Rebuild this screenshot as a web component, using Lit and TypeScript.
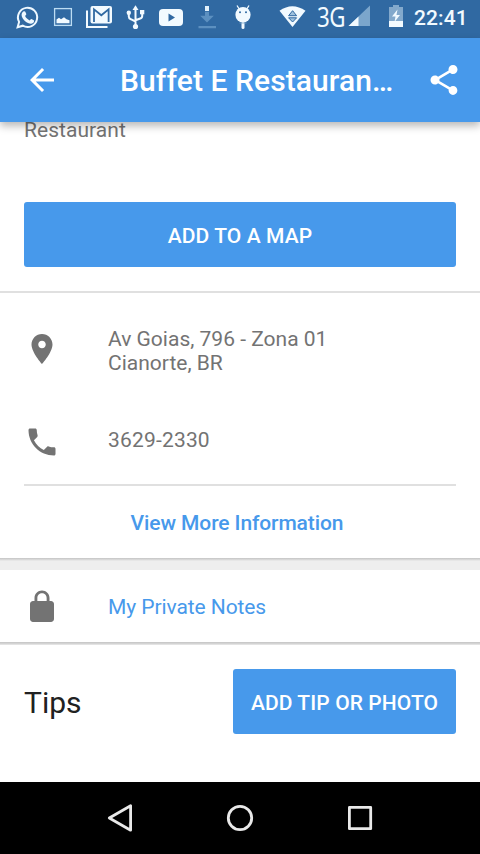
import { LitElement, html, css, svg } from "lit";
import { customElement } from "lit/decorators.js";

const glyph = (w: number, h: number, body: unknown) => html`<svg
  width=${w} height=${h} viewBox="0 0 ${w} ${h}">${body}</svg>`;

const material = (d: string) => html`<svg width="36" height="36" viewBox="0 0 24 24"
  fill="currentColor"><path d=${d}></path></svg>`;

const BACK = "M20 11H7.83l5.59-5.59L12 4l-8 8 8 8 1.41-1.41L7.83 13H20v-2z";
const SHARE = "M18 16.08c-.76 0-1.44.3-1.96.77L8.91 12.7c.05-.23.09-.46.09-.7s-.04-.47-.09-.7l7.05-4.11c.54.5 1.25.81 2.04.81 1.66 0 3-1.34 3-3s-1.34-3-3-3-3 1.34-3 3c0 .24.04.47.09.7L8.04 9.81C7.5 9.31 6.79 9 6 9c-1.66 0-3 1.34-3 3s1.34 3 3 3c.79 0 1.5-.31 2.04-.81l7.12 4.16c-.05.21-.08.43-.08.65 0 1.61 1.31 2.92 2.92 2.92s2.92-1.31 2.92-2.92-1.31-2.92-2.92-2.92z";
const PLACE = "M12 2C8.13 2 5 5.13 5 9c0 5.25 7 13 7 13s7-7.75 7-13c0-3.87-3.13-7-7-7zm0 9.5c-1.38 0-2.5-1.12-2.5-2.5s1.12-2.5 2.5-2.5 2.5 1.12 2.5 2.5-1.12 2.5-2.5 2.5z";
const PHONE = "M6.62 10.79c1.44 2.83 3.76 5.14 6.59 6.59l2.2-2.2c.27-.27.67-.36 1.02-.24 1.12.37 2.33.57 3.57.57.55 0 1 .45 1 1V20c0 .55-.45 1-1 1-9.39 0-17-7.61-17-17 0-.55.45-1 1-1h3.5c.55 0 1 .45 1 1 0 1.25.2 2.45.57 3.57.11.35.03.74-.25 1.02l-2.2 2.2z";
const LOCK = "M18 8h-1V6c0-2.76-2.24-5-5-5S7 3.24 7 6v2H6c-1.1 0-2 .9-2 2v10c0 1.1.9 2 2 2h12c1.1 0 2-.9 2-2V10c0-1.1-.9-2-2-2zM15.1 8H8.9V6c0-1.71 1.39-3.1 3.1-3.1s3.1 1.39 3.1 3.1v2z";

@customElement("status-bar")
class StatusBar extends LitElement {
  static styles = css`
    :host { display: flex; height: 38px; box-sizing: border-box; padding-left: 9px;
      background: #3069a2; color: #f2faff; }
    svg { display: block; flex: none; }
    .network { width: 31px; margin-left: 8px; font: 400 26px/34px "Noto Sans", sans-serif;
      letter-spacing: -0.5px; white-space: nowrap; transform: scale(0.86, 1.04); transform-origin: left 0; margin-top: -1px; }
    .battery { margin-left: 17px; }
    .clock { margin-left: 11px; font: 500 21px/36px Roboto, sans-serif; letter-spacing: 0.1px; }
  `;
  render() {
    return html`
      ${glyph(36, 38, svg`<g fill="none" stroke="#eef8ff">
        <path d="M8.6 27.2l1.5-5.3a9.6 9.6 0 1 1 3.7 3.8z" stroke-width="2"></path></g>
        <path fill="#eef8ff" d="M14.3 11.6c.8-.6 1.7-.6 2 .1l1 2.4c.2.7-.9 1.5-1.2 2 .9 2 2.6 3.5 4.6 4.3.5-.4 1.2-1.6 1.8-1.4l2.3 1.2c.7.5.1 2-.5 2.6-1.5 1.2-3.3 1-5.3.2-2.7-1.1-5-3.6-6.1-6.3-.7-2-.2-4 1.400-5.100z"></path>`)}
      ${glyph(36, 38, svg`
        <rect x="9.600" y="8.600" width="16.800" height="16.800" fill="none" stroke="#bcdcf3" stroke-width="1.300"></rect>
        <path fill="#f2faff" d="M11.500 19.500l2.500-1.800 2 1.500 3-2 2.500 2 3 1v3h-13z"></path>`)}
      ${glyph(36, 38, svg`<path d="M6 10.500V27h20.500" fill="none" stroke="#f2faff" stroke-width="2"></path>
        <rect x="9.500" y="6" width="21.500" height="17.500" rx="2" fill="#f2faff"></rect>
        <path d="M13 22V9.300l7.300 6 7.300-6V22" fill="none" stroke="#3069a2" stroke-width="1.800"></path>`)}
      ${glyph(36, 38, svg`<g fill="none" stroke="#f2faff" stroke-width="2">
        <path d="M18.500 9v16M11.800 14v2.500q0 2 2 2.700l4.700 2.300M25.200 13v3q0 2-2 2.500l-4.700 1.700"></path></g>
        <g fill="#f2faff"><path d="M18.500 5.200l3 4.800h-6z"></path><circle cx="18.500" cy="26.500" r="2.600"></circle>
        <circle cx="11.800" cy="12.700" r="2.200"></circle><rect x="23" y="10" width="4.300" height="4.300"></rect></g>`)}
      ${glyph(36, 38, svg`<rect x="6" y="9" width="24" height="17" rx="4" fill="#f2faff"></rect>
        <path d="M15.500 13.500l6.500 4-6.500 4z" fill="#3069a2"></path>`)}
      ${glyph(36, 38, svg`<path d="M16 6h4v5h-4z" fill="#e2f1fb"></path>
        <path d="M16 11.700h4v4h4.800L18 22.500l-6.800-6.800H16zM9.500 26h17.500v2.300H9.500z" fill="#5c90c0"></path>`)}
      ${glyph(36, 38, svg`<g fill="#f2faff"><ellipse cx="18" cy="14.800" rx="7.600" ry="7.800"></ellipse>
        <rect x="16.500" y="21.500" width="3" height="7.500" rx="1.500"></rect></g>
        <path d="M12 5.500l2.500 4M24 5.500l-2.500 4" stroke="#f2faff" stroke-width="1.300"></path>
        <circle cx="15" cy="12.300" r="1" fill="#3069a2"></circle><circle cx="21" cy="12.300" r="1" fill="#3069a2"></circle>
        <path d="M14.500 23h7" fill="none" stroke="#7ba6cc" stroke-width=".8"></path>`)}
      ${glyph(48, 38, svg`<path fill="#f2faff" d="M18.500 10.700q12.800-9 26 0L31.500 27z"></path>
        <path d="M27.600 15.700l4-5 4 5zM27.600 17.800h8l-4 4.200z" fill="#9fc2de" stroke="#3069a2" stroke-width="1"></path>`)}
      <span class="network">3G</span>
      ${glyph(24, 38, svg`<path d="M22 5.500V26H.5z" fill="#7ba6cc"></path>
        <path d="M10.500 16.500V26H.5z" fill="#f2faff"></path>`)}
      <svg class="battery" width="14" height="38" viewBox="0 0 14 38">
        <path d="M0 7h4V5h6v2h4v14H0z" fill="#83a9cc"></path>
        <path d="M0 21h14v6H0z" fill="#f2faff"></path>
        <path d="M8.500 9.500l-5.500 7h3.500l-1 5.500 5.500-7H7.500z" fill="#f2faff"></path></svg>
      <span class="clock">22:41</span>`;
  }
}

@customElement("nav-bar")
class NavBar extends LitElement {
  static styles = css`
    :host { display: flex; justify-content: center; align-items: center; gap: 84px;
      height: 72px; background: #000; }
    svg { fill: none; stroke: #e9e9e9; stroke-width: 2.8; stroke-linejoin: round; }
  `;
  render() {
    return html`
      ${glyph(36, 36, svg`<path d="M7.300 18L28.600 5.800v24.400z"></path>`)}
      ${glyph(36, 36, svg`<circle cx="18" cy="18" r="11.700"></circle>`)}
      ${glyph(36, 36, svg`<rect x="7.400" y="7.400" width="21.300" height="21.300"></rect>`)}`;
  }
}

@customElement("app-root")
class AppRoot extends LitElement {
  static styles = css`
    :host { display: flex; flex-direction: column; width: 480px; height: 854px; overflow: hidden;
      background: #fff; color: #737373; font: 400 21px/24px Roboto, sans-serif; }
    * { box-sizing: border-box; }
    svg { display: block; flex: none; }
    status-bar, nav-bar { flex: none; }
    .appbar { flex: none; display: flex; align-items: center; height: 84px; padding: 0 18px 0 24px;
      background: #4799eb; color: #fff; z-index: 1;
      box-shadow: 0 4px 8px rgba(0, 0, 0, 0.28); }
    .title { margin: 2px 0 0 60px; width: 276px; font: 500 30px/36px Roboto, sans-serif;
      letter-spacing: 0.08px; white-space: nowrap; }
    .share { margin-left: auto; }
    .content { flex: 1; min-height: 0; }
    .head { height: 171px; padding: 0 24px; border-bottom: 2px solid #e0e0e0; }
    .category { height: 80px; line-height: 16px; letter-spacing: 0.05px; }
    .button { display: flex; align-items: center; justify-content: center; height: 65px;
      border: 0; border-radius: 3px; padding: 2px 0 0; background: #4799eb; color: #fff;
      font: 500 21px/24px Roboto, sans-serif; letter-spacing: 0.1px; white-space: nowrap; }
    .wide { width: 100%; }
    .row { display: flex; align-items: center; gap: 48px; padding: 0 24px; }
    .address { height: 112px; }
    .address span { padding-top: 4px; }
    .phone { height: 74px; letter-spacing: 0.18px; }
    .phone span { margin-bottom: 4px; }
    .more { display: flex; justify-content: center; align-items: center; height: 74px; margin: 5px 24px 0;
      padding: 2px 6px 0 0; border-top: 2px solid #e0e0e0; color: #4799eb; font-weight: 500;
      letter-spacing: -0.1px; }
    .gap { height: 12px; background: linear-gradient(#c4c4c4, #dedede 2px, #eee 3px); }
    .notes { height: 72px; padding-top: 2px; color: #4799eb; letter-spacing: -0.08px; }
    .notes svg { color: #737373; }
    .rule { height: 3px; background: linear-gradient(#c4c4c4, #d8d8d8 2px, #eee); }
    .tips { display: flex; justify-content: space-between; align-items: center; padding: 24px 24px 0; }
    .tips h2 { margin: 2px 0 0; color: #212121; font: 400 30px/36px Roboto, sans-serif; }
    .tips .button { width: 223px; }
  `;
  render() {
    return html`
      <status-bar></status-bar>
      <header class="appbar">
        ${material(BACK)}
        <h1 class="title">Buffet E Restauran…</h1>
        <span class="share">${material(SHARE)}</span>
      </header>
      <main class="content">
        <section class="head">
          <div class="category">Restaurant</div>
          <button class="button wide">ADD TO A MAP</button>
        </section>
        <div class="row address">${material(PLACE)}<span>Av Goias, 796 - Zona 01<br />Cianorte, BR</span></div>
        <div class="row phone">${material(PHONE)}<span>3629-2330</span></div>
        <div class="more">View More Information</div>
        <div class="gap"></div>
        <div class="row notes">${material(LOCK)}<span>My Private Notes</span></div>
        <div class="rule"></div>
        <section class="tips"><h2>Tips</h2><button class="button">ADD TIP OR PHOTO</button></section>
      </main>
      <nav-bar></nav-bar>`;
  }
}
